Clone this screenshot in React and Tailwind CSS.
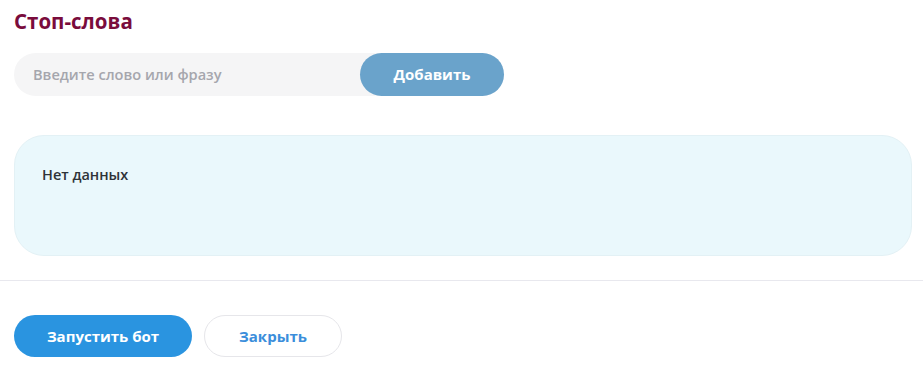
import { useState } from "react";

export default function App() {
  const [word, setWord] = useState("");
  const [words] = useState([]);

  return (
    <div className="w-[923px] h-[375px] bg-white font-['Open_Sans',sans-serif] overflow-hidden">
      <div className="px-[14px] pt-[8px]">
        <h2 className="text-[20.5px] leading-[26px] font-bold text-[#7a0c3c]">Стоп-слова</h2>

        {/* input + add */}
        <div className="mt-[19px] flex w-[490px] h-[43px] rounded-full bg-[#f5f5f6]">
          <input
            className="flex-1 min-w-0 bg-transparent pl-[19px] text-[14.6px] font-semibold text-[#333] placeholder:text-[#a5a6ad] outline-none"
            placeholder="Введите слово или фразу"
            value={word}
            onChange={(e) => setWord(e.target.value)}
          />
          <button className="w-[144px] h-[43px] rounded-full bg-[#6aa3cb] text-white text-[15px] font-bold">
            Добавить
          </button>
        </div>

        {/* list */}
        <div className="mt-[39px] mr-[-3px] h-[121px] rounded-[30px] bg-[#eaf8fc] border border-[#e3f1f5] px-[27px] pt-[29px]">
          {words.length === 0 ? (
            <p className="text-[14.5px] leading-[20px] font-semibold text-[#2e3338]">Нет данных</p>
          ) : null}
        </div>
      </div>

      <div className="mt-[24px] border-t border-[#e8e8ee]"></div>

      {/* footer */}
      <div className="px-[14px] pt-[34px] flex gap-[12px]">
        <button className="w-[178px] h-[42px] rounded-full bg-[#2a94e0] text-white text-[15px] font-bold">
          Запустить бот
        </button>
        <button className="w-[138px] h-[42px] rounded-full bg-white border border-[#e6e6ea] text-[#3b8edb] text-[15px] font-bold">
          Закрыть
        </button>
      </div>
    </div>
  );
}
